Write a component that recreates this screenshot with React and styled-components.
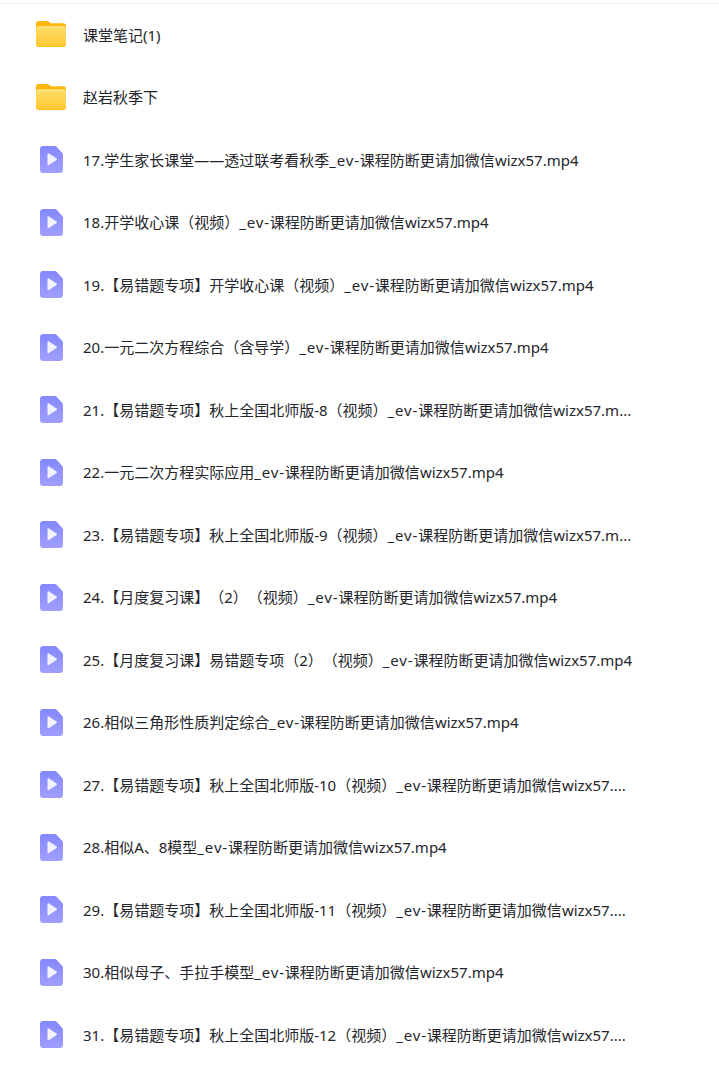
import React from "react";
import styled, { createGlobalStyle } from "styled-components";

const FULL = "wizx57.mp4";
const CUT_M = "wizx57.m...";
const CUT = "wizx57....";

const folders = ["课堂笔记(1)", "赵岩秋季下"];

const videos = [
  { title: "17.学生家长课堂——透过联考看秋季", tail: FULL },
  { title: "18.开学收心课（视频）", tail: FULL },
  { title: "19.【易错题专项】开学收心课（视频）", tail: FULL },
  { title: "20.一元二次方程综合（含导学）", tail: FULL },
  { title: "21.【易错题专项】秋上全国北师版-8（视频）", tail: CUT_M },
  { title: "22.一元二次方程实际应用", tail: FULL },
  { title: "23.【易错题专项】秋上全国北师版-9（视频）", tail: CUT_M },
  { title: "24.【月度复习课】（2）（视频）", tail: FULL },
  { title: "25.【月度复习课】易错题专项（2）（视频）", tail: FULL },
  { title: "26.相似三角形性质判定综合", tail: FULL },
  { title: "27.【易错题专项】秋上全国北师版-10（视频）", tail: CUT },
  { title: "28.相似A、8模型", tail: FULL },
  { title: "29.【易错题专项】秋上全国北师版-11（视频）", tail: CUT },
  { title: "30.相似母子、手拉手模型", tail: FULL },
  { title: "31.【易错题专项】秋上全国北师版-12（视频）", tail: CUT },
];

const GlobalStyle = createGlobalStyle`
  html, body {
    margin: 0;
    padding: 0;
    background: #fff;
  }
`;

const FolderIcon = () => (
  <svg width="30" height="26" viewBox="0 0 30 26">
    <defs>
      <linearGradient id="folderFront" x1="0" y1="0" x2="0" y2="1">
        <stop offset="0" stopColor="#ffe68a" />
        <stop offset="0.15" stopColor="#ffd95f" />
        <stop offset="1" stopColor="#ffca35" />
      </linearGradient>
    </defs>
    <path
      d="M2.500 0h8.500c1.100 0 1.800.4 2.400 1.100l1 1.200h13.100c1.400 0 2.500 1.100 2.500 2.500v18.700c0 1.400-1.100 2.500-2.500 2.500h-25C1.100 26 0 24.900 0 23.500V2.500C0 1.100 1.100 0 2.500 0z"
      fill="#ffb70d"
    />
    <path
      d="M2.400 5.300h25.200c1.300 0 2.400 1 2.400 2.300v15.300c0 1.300-1.100 2.300-2.400 2.300H2.400C1.100 25 0 24 0 22.900V7.600c0-1.300 1.100-2.300 2.400-2.300z"
      fill="url(#folderFront)"
    />
  </svg>
);

const VideoIcon = () => (
  <svg width="23" height="27" viewBox="0 0 23 27">
    <defs>
      <linearGradient id="videoBody" x1="0" y1="0" x2="0" y2="1">
        <stop offset="0" stopColor="#8488ff" />
        <stop offset="1" stopColor="#a09fff" />
      </linearGradient>
    </defs>
    <path
      d="M3 0h11.800c.8 0 1.500.3 2 .9l5.300 5.800c.6.600.9 1.300.9 2.100V24c0 1.700-1.300 3-3 3H3c-1.700 0-3-1.300-3-3V3c0-1.700 1.300-3 3-3z"
      fill="url(#videoBody)"
    />
    <path d="M7.500 8.300c0-.8.800-1.200 1.500-.8l7.500 5c.6.400.6 1.200 0 1.600l-7.500 5c-.7.400-1.500 0-1.500-.8z" fill="#f3f3ff" />
  </svg>
);

const Page = styled.div`
  width: 719px;
  height: 1071px;
  overflow: hidden;
  background: #fff;
  padding-top: 3px;
  box-sizing: border-box;
  font-family: "Noto Sans", "Noto Sans CJK SC", sans-serif;
`;

const TopRule = styled.div`
  height: 1px;
  margin-bottom: -0.5px;
  background: #eeeeef;
`;

const Row = styled.div`
  height: 62.5px;
  display: flex;
  align-items: center;
  padding-left: 36px;
`;

const IconCell = styled.div`
  width: 30px;
  height: 27px;
  display: flex;
  justify-content: center;
  margin-right: 17px;
  flex-shrink: 0;
`;

const Name = styled.div`
  font-size: 15px;
  line-height: 22px;
  color: #25262b;
  white-space: nowrap;
  text-spacing-trim: space-all;
`;

const Prefix = styled.span`
  letter-spacing: 0.85px;
`;

export default function App() {
  return (
    <Page>
      <GlobalStyle />
      <TopRule />
      {folders.map((name) => (
        <Row key={name}>
          <IconCell><FolderIcon /></IconCell>
          <Name>{name}</Name>
        </Row>
      ))}
      {videos.map((v) => (
        <Row key={v.title}>
          <IconCell><VideoIcon /></IconCell>
          <Name>
            {v.title}
            <Prefix>_ev-</Prefix>
            课程防断更请加微信{v.tail}
          </Name>
        </Row>
      ))}
    </Page>
  );
}
